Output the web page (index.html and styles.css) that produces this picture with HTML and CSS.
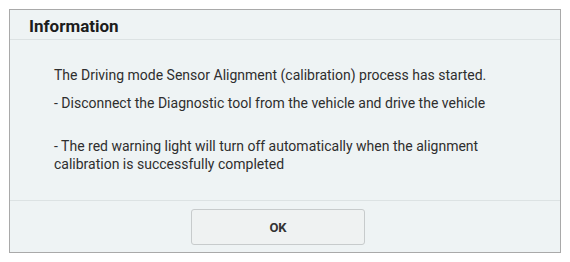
FILE: index.html
```html
<!DOCTYPE html>
<html>
<head>
<meta charset="utf-8">
<link rel="stylesheet" href="styles.css">
</head>
<body>
<div class="dialog">
  <div class="dialog-header">Information</div>
  <div class="dialog-body">
    <p>The Driving mode Sensor Alignment (calibration) process has started.</p>
    <p>- Disconnect the Diagnostic tool from the vehicle and drive the vehicle</p>
    <p class="last">- The red warning light will turn off automatically when the alignment calibration is successfully completed</p>
  </div>
  <div class="dialog-footer">
    <button class="btn">OK</button>
  </div>
</div>
</body>
</html>
```
FILE: styles.css
```css
html, body {
  margin: 0;
  padding: 0;
  background: #ffffff;
}
body {
  padding: 9px 9px 0 9px;
  font-family: Roboto, "Noto Sans", sans-serif;
  color: #222;
}
.dialog {
  width: 550px;
  height: 242px;
  border: 1px solid #a9a9a9;
  background: #eef3f4;
  display: flex;
  flex-direction: column;
}
.dialog-header {
  height: 30px;
  box-sizing: border-box;
  padding-top: 3px;
  border-bottom: 1px solid #dce2e3;
  padding-left: 19px;
  font-weight: bold;
  font-size: 17px;
  line-height: 26px;
  color: #1c1c1c;
}
.dialog-body {
  flex: 1;
  padding: 26px 24px 0 44px;
  font-size: 14px;
  line-height: 18px;
  color: #2e2e2e;
}
.dialog-body p {
  margin: 0 0 10px 0;
}
.dialog-body p.last {
  margin-top: 25px;
}
.dialog-footer {
  height: 52px;
  border-top: 1px solid #dce2e3;
  display: flex;
  justify-content: center;
  align-items: flex-start;
  padding-top: 8px;
  box-sizing: border-box;
}
.btn {
  width: 174px;
  height: 36px;
  border: 1px solid #c7cbcc;
  border-radius: 3px;
  background: #eff2f2;
  font-family: Roboto, "Noto Sans", sans-serif;
  font-weight: bold;
  font-size: 13px;
  color: #333;
  margin-right: 14px;
}
```
